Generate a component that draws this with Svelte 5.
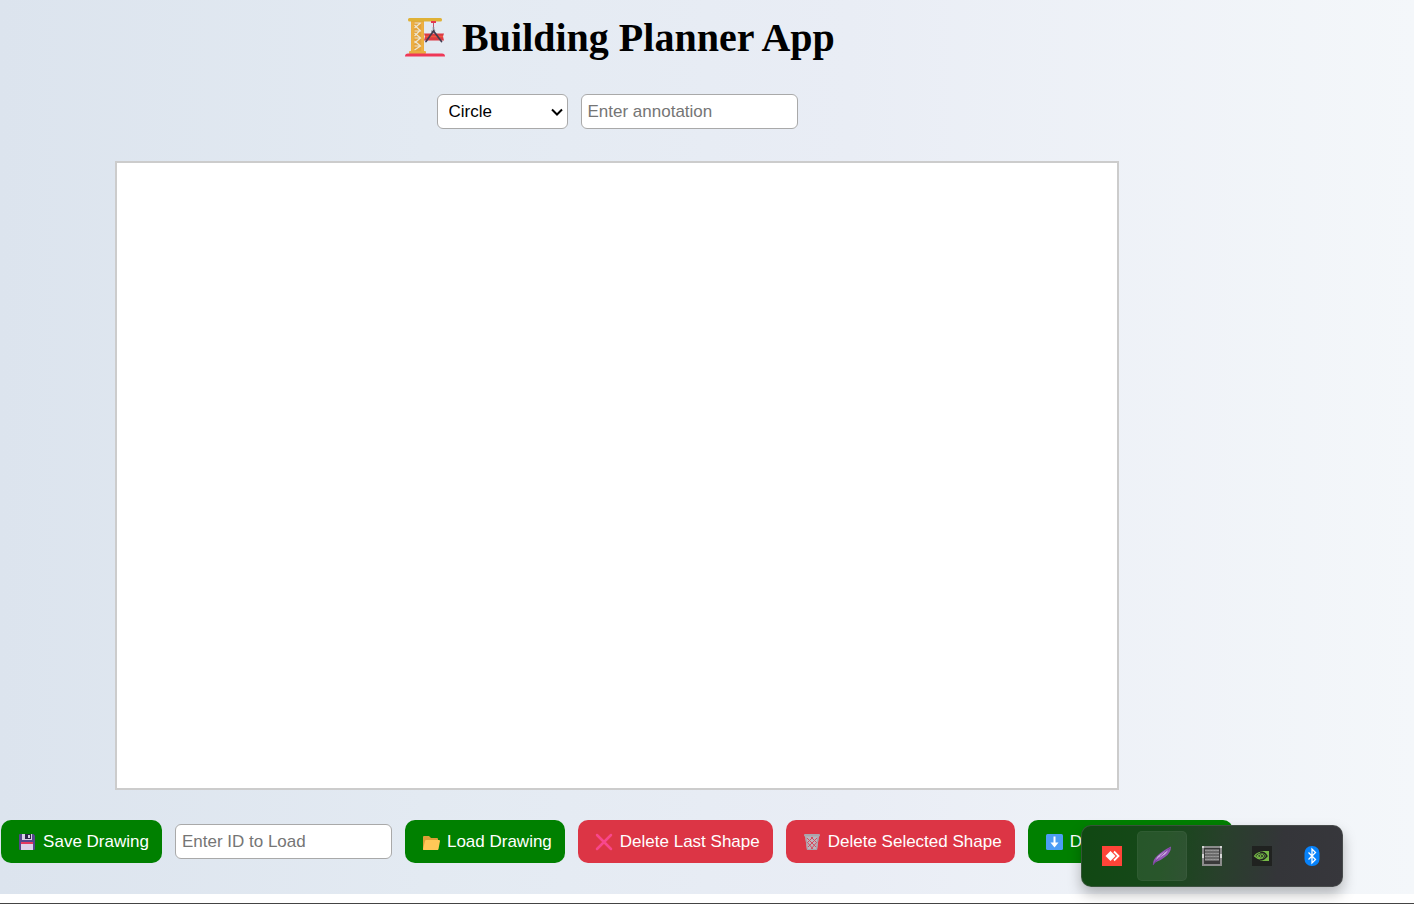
<script>
  let shape = $state('Circle');
  let annotation = $state('');
  let drawingId = $state('');
  const shapes = ['Circle', 'Rectangle', 'Line'];
</script>

{#snippet crane()}
  <svg class="crane" viewBox="0 0 40 40" aria-hidden="true">
    <rect x="6" y="3" width="13" height="33" fill="#e3a23c" />
    <path d="M9.500 6h6l-6 5M9.500 8l6 6h-6M15.500 13l-6 6M9.500 16l6 5h-6M15.500 21l-6 5M9.500 24l6 5h-6M15.500 29l-6 4" fill="none" stroke="#eee6cf" stroke-width="1.200" />
    <path d="M7.500 5v30M17.500 5v30" stroke="#eeb141" stroke-width="2.500" />
    <rect x="3" y="1" width="34" height="3.500" rx="1.500" fill="#dfb136" />
    <rect x="4" y="34" width="17" height="3" rx="1" fill="#e9ad40" />
    <path d="M0 39.500q0-3 3-3h34q3 0 3 3z" fill="#ef3857" />
    <rect x="26" y="4" width="5" height="2" fill="#e63950" />
    <path d="M28.500 6v5" stroke="#c1546d" stroke-width="1" />
    <path d="M28.500 10v2.500q2 1 0 2.500-2 0-1.500-1.500" fill="none" stroke="#8d8794" stroke-width="1.500" />
    <path d="M19 16.500h20l-1 3 1 4H19l1-4z" fill="#dc3b45" />
    <path d="M20 19.500h18" stroke="#f0583e" stroke-width="1.500" />
    <path d="M28.500 14L21 24.500M28.500 14L36.500 24.500" stroke="#433b50" stroke-width="1.700" stroke-linecap="round" />
  </svg>
{/snippet}

<main class="page">
  <div class="planner">
    <h1>{@render crane()}<span>Building Planner App</span></h1>

    <div class="controls">
      <div class="picker">
        <select aria-label="Shape" bind:value={shape}>
          {#each shapes as s}<option>{s}</option>{/each}
        </select>
        <svg viewBox="0 0 12 8" aria-hidden="true"><path d="M1 1.500l5 5 5-5" fill="none" stroke="#000" stroke-width="2" /></svg>
      </div>
      <input type="text" aria-label="Annotation" placeholder="Enter annotation" bind:value={annotation} />
    </div>

    <canvas class="board" width="1000" height="625"></canvas>

    <div class="actions">
      <button class="btn">
        <svg viewBox="0 0 18 18" aria-hidden="true">
          <path d="M1 2q0-1 1-1h13.500L17 2.500V16q0 1-1 1H2q-1 0-1-1z" fill="#55478c" />
          <path d="M4 1h10v6H4z" fill="#d9d2e4" /><path d="M7 1h6v5H7z" fill="#2e2848" /><path d="M10 2h2v3h-2z" fill="#d9d2e4" />
          <path d="M3 9h12v8H3z" fill="#ddd3e9" /><path d="M3 9h12v2H3z" fill="#e43a61" />
        </svg>
        Save Drawing
      </button>
      <input type="text" aria-label="Drawing ID" placeholder="Enter ID to Load" bind:value={drawingId} />
      <button class="btn">
        <svg viewBox="0 0 18 18" aria-hidden="true">
          <path d="M1 4q0-1 1-1h5l2 2h6q1 0 1 1v11H1z" fill="#dd9f37" />
          <path d="M4 7h13q1 0 1 1l-1.500 8q-.2 1-1.200 1H2q-1 0-1-1l2-8q.2-1 1-1z" fill="#ffc857" />
        </svg>
        Load Drawing
      </button>
      <button class="btn danger">
        <svg viewBox="0 0 18 18" aria-hidden="true">
          <path d="M2 2l14 14M16 2L2 16" stroke="#f8478c" stroke-width="2.500" stroke-linecap="round" />
        </svg>
        Delete Last Shape
      </button>
      <button class="btn danger">
        <svg viewBox="0 0 18 18" aria-hidden="true">
          <path d="M2 3h14l-2 14H4z" fill="#bdb4bd" />
          <path d="M4 5l9 9M8 4l6 6M4 9l6 7M14 5l-9 9M10 4L4 10M14 9l-6 7" stroke="#d54a5e" stroke-width="1" />
          <path d="M3 4l1.500 12.500h9L15 4" fill="none" stroke="#aaa1aa" stroke-width="1.200" />
          <rect x="1" y="1" width="16" height="2.500" rx="1" fill="#aaa5ac" />
        </svg>
        Delete Selected Shape
      </button>
      <button class="btn">
        <svg viewBox="0 0 18 18" aria-hidden="true">
          <rect x="1" y="1" width="17" height="16" rx="1.500" fill="#4c9df5" />
          <path d="M9.500 3.500v9" stroke="#fff" stroke-width="2" />
          <path d="M5.500 9.500h8l-4 5z" fill="#fff" />
        </svg>
        Download as Image
      </button>
    </div>
  </div>
</main>
<div class="edge"></div>

<aside class="tray" aria-label="Background apps">
  <button aria-label="Remote desktop">
    <svg viewBox="0 0 20 20"><path d="M0 0h20v20H0z" fill="#ff4438" /><path d="M8.500 5l5 5-5 5-5-5z" fill="#fff" /><path d="M12 5.500l4.500 4.500-4.500 4.500" fill="none" stroke="#fff" stroke-width="1.800" /></svg>
  </button>
  <button class="active" aria-label="Feather">
    <svg viewBox="0 0 20 20"><path d="M1 19q0-6 4-9Q10 5 19 .500 19 7 13 11q-5 4-9 5-2 1-3 3z" fill="#9155b5" /><path d="M4 14q1-4 5-6l7-4.500q-1 4-5 6-4 3-7 4.500z" fill="#cdb0de" /><path d="M1 19Q6 11 18 2" fill="none" stroke="#7b3da0" stroke-width="1" /></svg>
  </button>
  <button aria-label="Audio">
    <svg viewBox="0 0 20 20"><path d="M0 0h20v20H0z" fill="#858585" /><path d="M2 2h16v16H2z" fill="#3a3a3a" /><path d="M3 4.500h14M3 7.500h14M3 10.500h14M3 13.500h14" stroke="#999" stroke-width="1.800" /><path d="M5 3v12M8 3v12M11 3v12M14 3v12" stroke="#777" stroke-width=".5" /><path d="M1 1h18v18H1z" fill="none" stroke="#8c8c8c" stroke-width="2" /><path d="M1 8v4M19 8v4M0 1h2M18 1h2" stroke="#eee" stroke-width="1.500" /></svg>
  </button>
  <button aria-label="Graphics settings">
    <svg viewBox="0 0 20 20"><path d="M0 0h20v20H0z" fill="#202220" /><path d="M8 5h9v10H8z" fill="#76b947" /><path d="M2.500 10Q8 3 15 10q-6 6-12.500 0z" fill="#202220" stroke="#76b947" stroke-width="1.200" /><path d="M8 6q5 0 7 4-3 4-7 4" fill="none" stroke="#202220" stroke-width="1.300" /><path d="M5 10q4-4 7 0-3 4-7 0z" fill="none" stroke="#76b947" stroke-width="1.200" /><circle cx="8.500" cy="10" r="1" fill="#76b947" /></svg>
  </button>
  <button aria-label="Bluetooth">
    <svg viewBox="0 0 20 20"><rect x="2.500" width="15" height="20" rx="7" fill="#0782fa" /><path d="M6.500 6.500l7 7-3.500 3.500V3l3.500 3.500-7 7" fill="none" stroke="#fff" stroke-width="1.300" /></svg>
  </button>
</aside>

<style>
  :global(body) { margin: 0; background: #fff; }
  .page {
    background: linear-gradient(to right, #dce4ee 0%, #e3eaf2 30%, #e9edf5 60%, #f4f7fa 100%);
    padding: 15px 0 31px;
    overflow: hidden;
  }
  .planner {
    max-width: 1234px;
    display: flex;
    flex-direction: column;
    align-items: center;
  }
  h1 {
    margin: 0;
    padding-left: 6px;
    display: flex;
    align-items: center;
    gap: 17px;
    font: bold 40px/46px "Liberation Serif", "Times New Roman", serif;
    color: #000;
  }
  .crane { width: 40px; height: 40px; margin-bottom: 2px; }
  .controls { display: flex; align-items: center; gap: 13px; margin: 33px 0 32px; }
  select, input, .btn { font: 17px/20px "Liberation Sans", Arial, sans-serif; box-sizing: border-box; }
  select, input {
    height: 35px;
    border: 1px solid #a9a9a9;
    border-radius: 6px;
    background: #fff;
    color: #000;
  }
  .picker { display: grid; align-items: center; }
  .picker > * { grid-area: 1 / 1; }
  .picker svg { width: 12px; height: 8px; justify-self: end; margin-right: 5px; pointer-events: none; }
  select { appearance: none; width: 131px; padding: 0 20px 0 11px; }
  input { width: 217px; padding: 0 6px; }
  input::placeholder { color: #757575; opacity: 1; }
  .board {
    box-sizing: border-box;
    width: 100%;
    max-width: 1004px;
    border: 2px solid #ccc;
    background: #fff;
  }
  .actions { display: flex; align-items: center; justify-content: center; gap: 13px; margin-top: 30px; }
  .btn {
    display: flex;
    align-items: center;
    gap: 7px;
    height: 43px;
    padding: 0 13px 0 17px;
    border: 0;
    border-radius: 10px;
    background: #008000;
    color: #fff;
    white-space: nowrap;
  }
  .btn.danger { background: #dc3545; }
  .btn svg { width: 18px; height: 18px; flex: none; }
  .edge { height: 9px; border-bottom: 1px solid #444; }
  .tray {
    position: fixed;
    right: 71px;
    bottom: 17px;
    display: flex;
    padding: 5px;
    border: 1px solid #5a605c80;
    border-radius: 10px;
    background: linear-gradient(100deg, #104812 0%, #17481a 32%, #28402b 53%, #343539 75%, #37373c 100%) border-box;
    box-shadow: 0 7px 14px #0004;
  }
  .tray button {
    display: grid;
    place-items: center;
    width: 50px;
    height: 50px;
    padding: 0;
    border: 1px solid transparent;
    border-radius: 5px;
    background: none;
  }
  .tray button.active { background: #ffffff14; border-color: #ffffff0a; }
  .tray svg { width: 20px; height: 20px; }
</style>
